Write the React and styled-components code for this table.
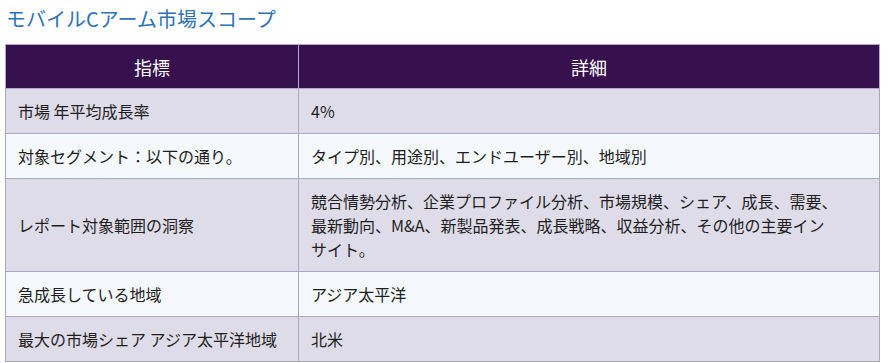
import React from 'react';
import styled, { createGlobalStyle } from 'styled-components';

const Global = createGlobalStyle`
  body {
    margin: 0;
    background: #ffffff;
    font-family: "Noto Sans CJK JP", "Noto Sans", sans-serif;
  }
`;

const Page = styled.div`
  padding: 4px 10px 0 5px;
`;

const Title = styled.h2`
  margin: 0 0 10px 1px;
  font-size: 20px;
  line-height: 30px;
  font-weight: 400;
  color: #2f72b3;
`;

const Table = styled.table`
  width: 875px;
  border-collapse: collapse;
  table-layout: fixed;
  font-size: 16px;
  line-height: 24px;
  color: #1e1e1e;
`;

const Head = styled.th`
  background: #36114d;
  color: #ffffff;
  font-weight: 400;
  font-size: 18px;
  padding: 10px 12px 9px;
  text-align: center;
  border: 1px solid #b3a9cc;
  width: ${(p) => p.$w || 'auto'};
`;

const Row = styled.tr`
  background: ${(p) => (p.$odd ? '#dedce9' : '#f5f8fc')};
`;

const Cell = styled.td`
  padding: 10px 12px;
  border: 1px solid #aaa6c4;
  vertical-align: middle;
  text-align: left;
`;

const Line = styled.span`
  display: block;
`;

const rows = [
  ['市場 年平均成長率', ['4%']],
  ['対象セグメント：以下の通り。', ['タイプ別、用途別、エンドユーザー別、地域別']],
  [
    'レポート対象範囲の洞察',
    [
      '競合情勢分析、企業プロファイル分析、市場規模、シェア、成長、需要、',
      '最新動向、M&A、新製品発表、成長戦略、収益分析、その他の主要イン',
      'サイト。',
    ],
  ],
  ['急成長している地域', ['アジア太平洋']],
  ['最大の市場シェア アジア太平洋地域', ['北米']],
];

export default function App() {
  return (
    <Page>
      <Global />
      <Title>モバイルCアーム市場スコープ</Title>
      <Table>
        <thead>
          <tr>
            <Head $w="268px">指標</Head>
            <Head>詳細</Head>
          </tr>
        </thead>
        <tbody>
          {rows.map((r, i) => (
            <Row key={i} $odd={i % 2 === 0}>
              <Cell>{r[0]}</Cell>
              <Cell>
                {r[1].map((t, j) => (
                  <Line key={j}>{t}</Line>
                ))}
              </Cell>
            </Row>
          ))}
        </tbody>
      </Table>
    </Page>
  );
}
